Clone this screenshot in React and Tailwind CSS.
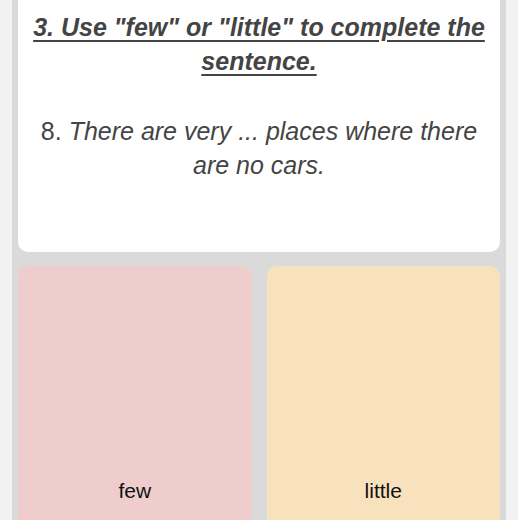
export default function App() {
  return (
    <div className="h-[520px] w-[518px] overflow-hidden bg-[#f2f2f2] px-[12px]" style={{ fontFamily: '"Liberation Sans", Arial, sans-serif' }}>
      <div className="h-full bg-[#dadada] px-[6px]">
        <div className="flex h-[252px] flex-col items-center rounded-b-[10px] bg-white px-[10px] pt-[10px] text-center text-[#444]">
          <div className="text-[25px] font-bold italic leading-[34px] underline decoration-[2px] underline-offset-[4px]">
            3. Use "few" or "little" to complete the sentence.
          </div>
          <div className="mt-[36px] px-[10px] text-[25px] leading-[34px]">
            8. <span className="italic">There are very ... places where there are no cars.</span>
          </div>
        </div>
        <div className="mt-[14px] grid grid-cols-2 gap-[15px]">
          <div className="flex h-[300px] items-start justify-center rounded-[10px] bg-[#efcdcd] pt-[212px] text-[21px] leading-[26px] text-[#111]">
            few
          </div>
          <div className="flex h-[300px] items-start justify-center rounded-[10px] bg-[#f8e2bd] pt-[212px] text-[21px] leading-[26px] text-[#111]">
            little
          </div>
        </div>
      </div>
    </div>
  );
}
